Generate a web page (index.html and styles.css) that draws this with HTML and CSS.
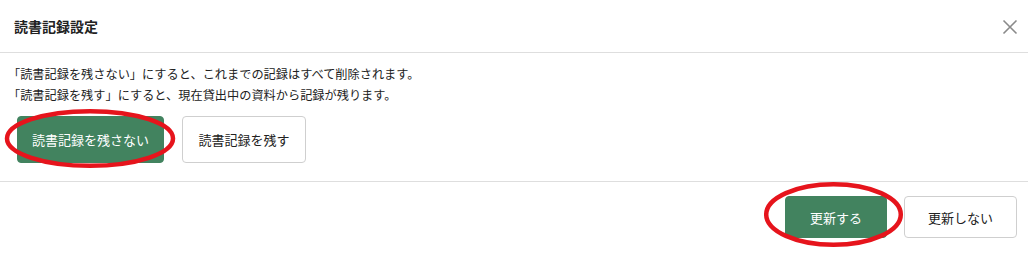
FILE: index.html
```html
<!DOCTYPE html>
<html lang="ja">
<head>
<meta charset="utf-8">
<title>読書記録設定</title>
<link rel="stylesheet" href="styles.css">
</head>
<body>
<div class="dialog">
  <div class="header">
    <h1 class="title">読書記録設定</h1>
    <button class="close" aria-label="閉じる">
      <svg width="16" height="16" viewBox="0 0 16 16"><path d="M1.5 1.5 L14.5 14.5 M14.5 1.5 L1.5 14.5" stroke="#8a8a8a" stroke-width="1.6" fill="none"/></svg>
    </button>
  </div>
  <div class="body">
    <p class="desc">「読書記録を残さない」にすると、これまでの記録はすべて削除されます。</p>
    <p class="desc">「読書記録を残す」にすると、現在貸出中の資料から記録が残ります。</p>
    <div class="choices">
      <button class="btn btn-primary btn-choice">読書記録を残さない</button>
      <button class="btn btn-secondary btn-choice">読書記録を残す</button>
    </div>
  </div>
  <div class="footer">
    <button class="btn btn-primary btn-footer">更新する</button>
    <button class="btn btn-secondary btn-footer">更新しない</button>
  </div>
  <svg class="marks" width="1028" height="254" viewBox="0 0 1028 254">
    <ellipse cx="90" cy="138.5" rx="83" ry="27.3" fill="none" stroke="#e6141c" stroke-width="4.5"/>
    <ellipse cx="833.5" cy="214.5" rx="67.3" ry="30.3" fill="none" stroke="#e6141c" stroke-width="4.5"/>
  </svg>
</div>
</body>
</html>
```
FILE: styles.css
```css
* { box-sizing: border-box; }
html, body { margin: 0; padding: 0; background: #fff; }
body {
  font-family: "Noto Sans CJK JP", "Noto Sans", sans-serif;
  color: #222;
  width: 1028px;
  height: 254px;
  overflow: hidden;
}
.dialog { position: relative; width: 1028px; height: 254px; }
.header {
  height: 53px;
  display: flex;
  align-items: center;
  justify-content: space-between;
  padding: 0 10px 0 14px;
  border-bottom: 1px solid #dedede;
}
.title {
  margin: 0;
  font-size: 14px;
  font-weight: bold;
  color: #222;
  line-height: 20px;
}
.close {
  border: none;
  background: transparent;
  padding: 0;
  width: 16px;
  height: 16px;
  margin-top: 2px;
  display: flex;
}
.body {
  padding: 11px 8px 18px 8px;
  border-bottom: 1px solid #dedede;
}
.desc {
  margin: 0;
  font-size: 12.2px;
  line-height: 21px;
  color: #222;
}
.choices {
  display: flex;
  gap: 18px;
  margin: 10px 0 0 9px;
}
.btn {
  font-family: inherit;
  font-size: 13px;
  border-radius: 4px;
  cursor: pointer;
  line-height: 1;
}
.btn-primary {
  background: #42835f;
  color: #fff;
  border: 1px solid #42835f;
}
.btn-secondary {
  background: #fff;
  color: #222;
  border: 1px solid #cfcfcf;
}
.btn-choice { height: 47px; padding: 0 14px; }
.btn-choice.btn-secondary { padding: 0 15.5px; }
.btn-footer { height: 42px; padding: 0 24px; }
.btn-footer.btn-secondary { padding: 0 23px; }
.footer {
  display: flex;
  justify-content: flex-end;
  gap: 17px;
  padding: 14px 11px 0 0;
}
.marks {
  position: absolute;
  left: 0;
  top: 0;
  pointer-events: none;
}
```
